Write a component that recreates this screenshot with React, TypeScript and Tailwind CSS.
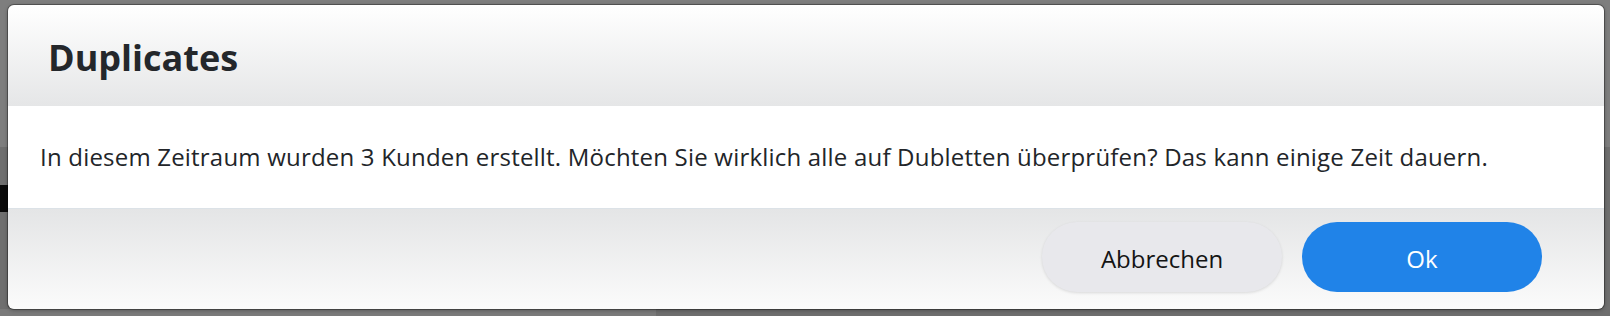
import React from "react";

export default function App() {
  return (
    <div className="relative w-[1610px] h-[316px] overflow-hidden bg-[#7d7d7d]">
      {/* page behind the overlay */}
      <div className="flex flex-col h-full">
        <div className="h-[147px] bg-[#7e7e7e]" />
        <div className="flex-1 bg-[#6f6f6f] flex flex-col">
          <div className="h-[38px]" />
          <div className="flex">
            <div className="w-[8px] h-[27px] bg-[#0a0a0a]" />
          </div>
          <div className="flex-1" />
          <div className="flex h-[7px]">
            <div className="w-[656px] bg-[#7a7a7a]" />
            <div className="flex-1 bg-[#6e6e6e]" />
          </div>
        </div>
      </div>

      {/* modal */}
      <div
        className="absolute left-[8px] top-[5px] w-[1596px] h-[304px] rounded-[6px] overflow-hidden flex flex-col ring-1 ring-black/30 shadow-[0_1px_4px_rgba(0,0,0,0.35)]"
        style={{ fontFamily: '"Open Sans", "Noto Sans", sans-serif' }}
      >
        <div className="h-[101px] bg-gradient-to-b from-white to-[#e5e6e7] flex items-center pl-[40px] pt-[4px]">
          <h1 className="text-[36px] font-bold text-[#24272b] leading-none tracking-[0px]">
            Duplicates
          </h1>
        </div>
        <div className="h-[103px] bg-white flex items-center pl-[32px] border-b border-[#dce2e7]">
          <p className="text-[24px] text-[#222529] leading-none tracking-[0.2px]">
            In diesem Zeitraum wurden 3 Kunden erstellt. Möchten Sie wirklich alle auf Dubletten überprüfen? Das kann einige Zeit dauern.
          </p>
        </div>
        <div className="flex-1 bg-gradient-to-b from-[#e4e5e6] to-[#fbfbfb] flex justify-end items-start pt-[13px] pr-[62px] gap-[20px]">
          <button className="w-[240px] h-[70px] rounded-full bg-[#e8e8ec] text-[#141414] text-[24px] pt-[3px] shadow-[0_1px_3px_rgba(0,0,0,0.12)]">
            Abbrechen
          </button>
          <button className="w-[240px] h-[70px] rounded-full bg-[#2083e8] text-white text-[24px] pt-[3px]">
            Ok
          </button>
        </div>
      </div>
    </div>
  );
}
